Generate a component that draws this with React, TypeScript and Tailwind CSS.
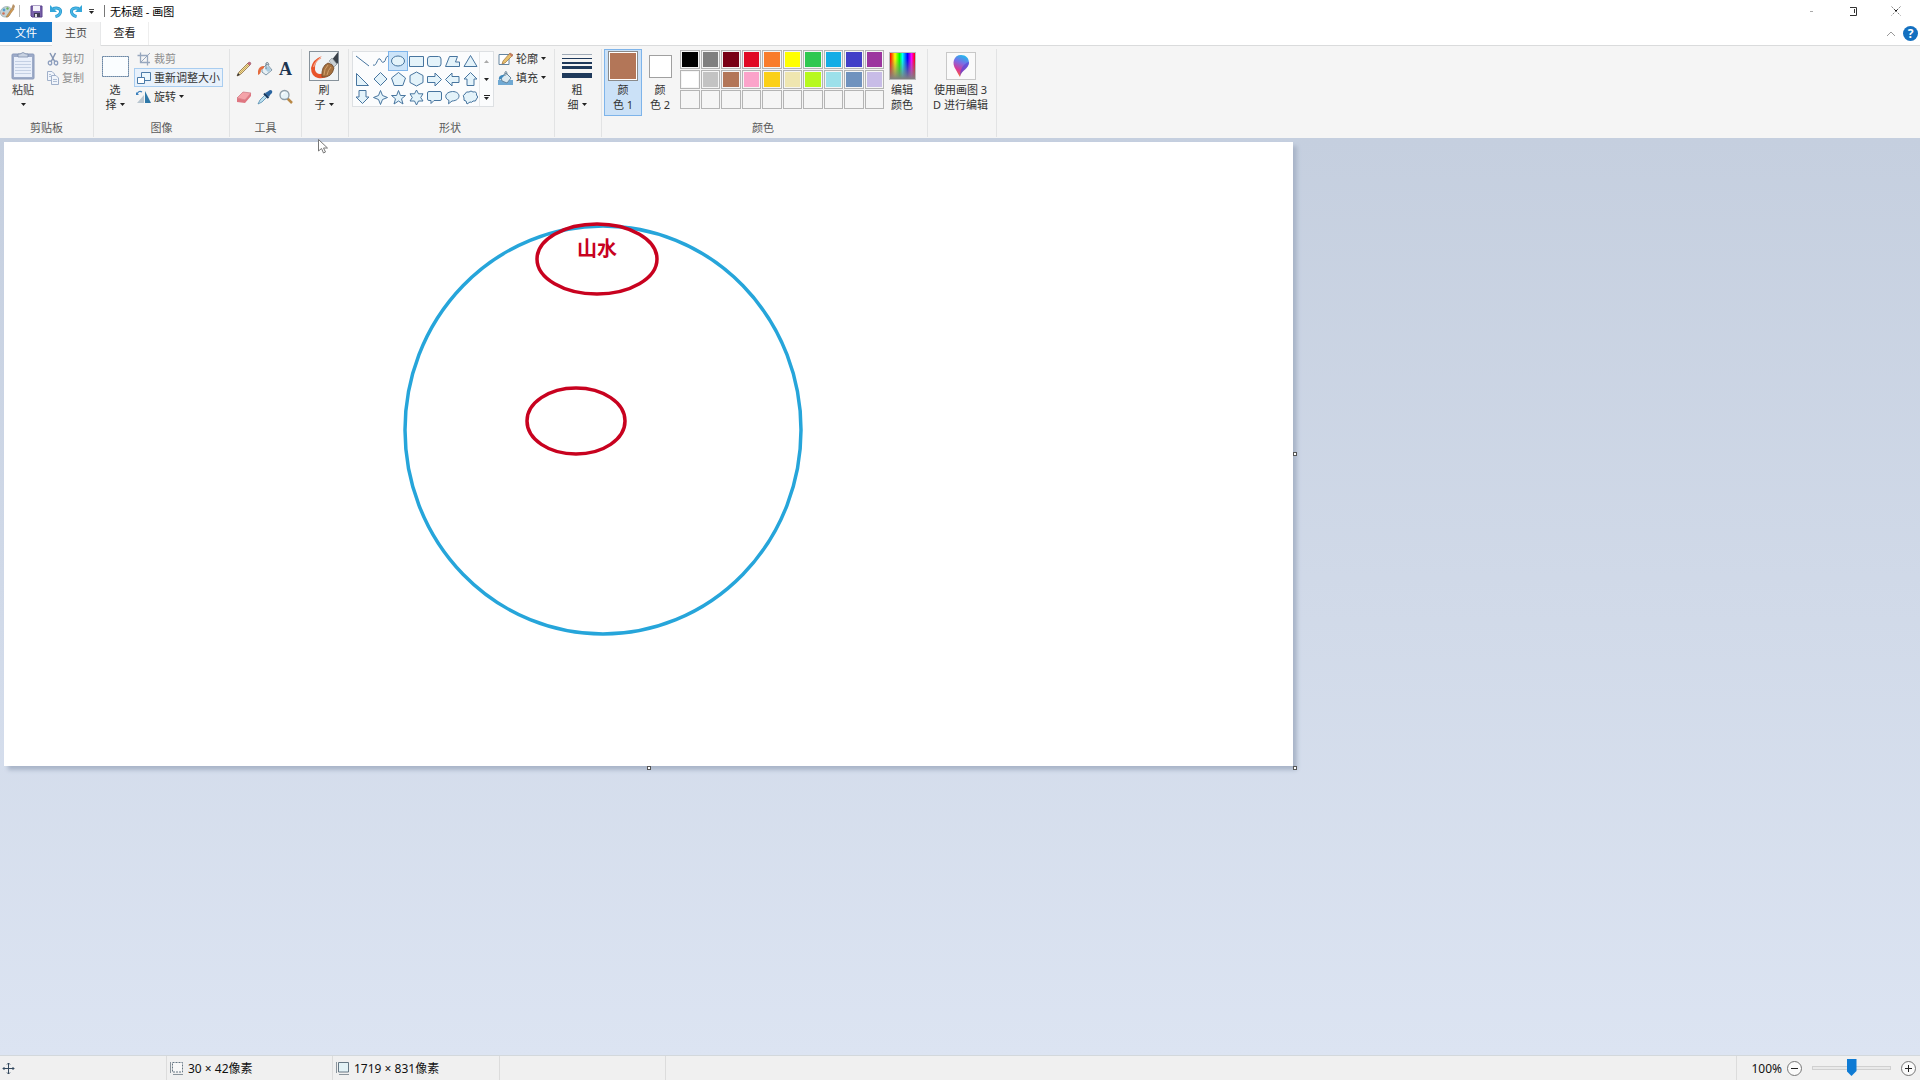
import type { ReactNode } from "react";

const row1 = ["#000000", "#7f7f7f", "#790015", "#e00a24", "#f97c2b", "#ffff00", "#2fc850", "#13ade6", "#423fc8", "#9c369f"];
const row2 = ["#ffffff", "#c3c3c3", "#b37658", "#fba3ca", "#fbd018", "#efe6b0", "#b7f91f", "#9ce0ea", "#7092be", "#c8bce7"];
const palette = [...row1, ...row2, ...Array(10).fill("")];

const shapes = [
  { name: "直线", d: "M2 3L15 13" },
  { name: "曲线", d: "M1 12C5 14 5 4 8 6C10 8 9 10 12 9C14 8 13 4 16 3" },
  { name: "椭圆形", d: "M1.500 8a6.500 5 0 1 0 13 0a6.500 5 0 1 0 -13 0Z" },
  { name: "矩形", d: "M1.5 3.500H15.500V13.500H1.500Z" },
  { name: "圆角矩形", d: "M4 3.500H12.500Q15 3.500 15 6V11Q15 13.500 12.500 13.500H4Q1.500 13.500 1.500 11V6Q1.500 3.500 4 3.500Z" },
  { name: "多边形", d: "M5.500 3.500H13.500L11.500 9H15.500V13.500H1.500Z" },
  { name: "三角形", d: "M8.500 2.500L15 13.500H2Z" },
  { name: "直角三角形", d: "M2.500 2.500V14.500H14.500Z" },
  { name: "菱形", d: "M8.500 1.500L15 8L8.500 14.500L2 8Z" },
  { name: "五边形", d: "M8.500 1.500L15.500 7L12.800 14.500H4.200L1.500 7Z" },
  { name: "六边形", d: "M8.500 1L15 4.500V11.500L8.500 15L2 11.500V4.500Z" },
  { name: "右箭头", d: "M1.500 5.500H9V2L15.500 8.500L9 15V11.500H1.500Z" },
  { name: "左箭头", d: "M15 5.500H8V2L1.500 8.500L8 15V11.500H15Z" },
  { name: "上箭头", d: "M8.500 1.500L15 8H12V14.500H5V8H2Z" },
  { name: "下箭头", d: "M5 1.500H12V8H15L8.500 14.500L2 8H5Z" },
  { name: "四角星形", d: "M8.500 1.500L10.500 6.500L15.500 8.500L10.500 10.500L8.500 15.500L6.500 10.500L1.500 8.500L6.500 6.500Z" },
  { name: "五角星形", d: "M8.500 1.500L10.400 6.500H15.500L11.500 9.800L13 15L8.500 12L4 15L5.500 9.800L1.500 6.500H6.600Z" },
  { name: "六角星形", d: "M8.500 1L10.500 4.800H15L12.700 8.500L15 12H10.500L8.500 16L6.500 12H2L4.300 8.500L2 4.800H6.500Z" },
  { name: "圆角矩形标注", d: "M3 2.500H14Q15.500 2.500 15.500 4V10Q15.500 11.500 14 11.500H8L5 14.500V11.500H3Q1.500 11.500 1.500 10V4Q1.500 2.500 3 2.500Z" },
  { name: "椭圆形标注", d: "M5 11.500C-0.500 9 1 3 8.500 2.500C17 2.500 17.500 11.500 8 12L4.500 14.800Z" },
  { name: "云形标注", d: "M4 12Q1 12 2 9Q0 6 3 5Q4 2 7 3Q9 1 11 3Q15 2 14.500 6Q17 8 14.500 10Q14 13 11 12Q10 14 8 13L5 15Z" },
];

function Caret({ up = false, className = "text-[#222]" }: { up?: boolean; className?: string }) {
  return (
    <svg viewBox="0 0 5 3" className={`inline-block h-[3px] w-[5px] shrink-0 ${className}`} aria-hidden="true">
      <path d={up ? "M0 3L2.500 0L5 3Z" : "M0 0H5L2.500 3Z"} fill="currentColor" />
    </svg>
  );
}

function Group({ label, className, children }: { label?: string; className: string; children: ReactNode }) {
  return (
    <section className={`flex shrink-0 flex-col border-r border-[#e2e3e4] ${className}`}>
      <div className="flex h-[71px] items-start">{children}</div>
      <div className="text-center leading-[16px] text-[#5a5a5a]">{label}</div>
    </section>
  );
}

function BigButton({ icon, active = false, className = "", children }: { icon: ReactNode; active?: boolean; className?: string; children: ReactNode }) {
  return (
    <button
      className={`flex h-[67px] flex-col items-center border leading-[15px] ${active ? "border-[#7eb4ea] bg-[#cbe1f7]" : "border-transparent"} ${className}`}
    >
      <span className="flex h-[32px] items-center justify-center">{icon}</span>
      {children}
    </button>
  );
}

function SmallButton({ icon, active = false, className = "", children }: { icon: ReactNode; active?: boolean; className?: string; children: ReactNode }) {
  return (
    <button
      className={`flex h-[19px] items-center gap-[3px] border whitespace-nowrap ${active ? "border-[#a9cdf0] bg-[#e8f1fb]" : "border-transparent"} ${className}`}
    >
      {icon}
      {children}
    </button>
  );
}

function PaintIcon() {
  return (
    <svg viewBox="0 0 16 16" className="size-4" aria-hidden="true">
      <path d="M1 7C4 2 10 3 11 6C12 9 9 9 10 11C10 14 5 15 2 13C0 11 0 9 1 7Z" fill="#c4d3d6" stroke="#8fa5ab" strokeWidth=".7" />
      <circle cx="4" cy="7" r="1.400" fill="#4f9fd0" />
      <circle cx="7.500" cy="5.500" r="1.200" fill="#71b25b" />
      <circle cx="3.500" cy="10.500" r="1.300" fill="#cf7058" />
      <path d="M6 14L12 5L14 6L8 14Z" fill="#d49a52" stroke="#94703f" strokeWidth=".5" />
      <path d="M11.500 5L13 1L15 3L14 6Z" fill="#b69268" />
    </svg>
  );
}

function SaveIcon() {
  return (
    <svg viewBox="0 0 13 13" className="size-[13px]" aria-hidden="true">
      <path d="M1 1H12V12H2L1 11Z" fill="#7861a9" stroke="#5a438d" />
      <path d="M3 1H10V6H3Z" fill="#f4f2fa" />
      <path d="M4 8H10V12H4Z" fill="#3d3954" />
      <path d="M5 9H7V12H5Z" fill="#ddd" />
    </svg>
  );
}

function UndoIcon({ flip = false }: { flip?: boolean }) {
  return (
    <svg viewBox="0 0 14 14" className={flip ? "size-[14px] -scale-x-100" : "size-[14px]"} aria-hidden="true">
      <path d="M4 4.500C9 3 12 5 11.500 8C11 11 9 12 6.500 12.500" fill="none" stroke="#2793cb" strokeWidth="3" />
      <path d="M4 4.500C9 3 12 5 11.500 8C11 11 9 12 6.500 12.500" fill="none" stroke="#49b8e6" strokeWidth="1.600" />
      <path d="M1 1V8H8Z" fill="#35a7da" />
    </svg>
  );
}

function PasteIcon() {
  return (
    <svg viewBox="0 0 24 28" className="h-[28px] w-[24px]" aria-hidden="true">
      <rect x="1" y="2" width="22" height="25" rx="1" fill="#9dabc8" stroke="#8a9abb" />
      <path d="M3 5H21V25H3Z" fill="#e9effa" />
      <path d="M4 9.500H20M4 12.500H20M4 15.500H20M4 18.500H20M4 21.500H20" stroke="#c4d0e4" />
      <path d="M7 2H9Q12 -1 15 2H17V5H7Z" fill="#c8d2e2" stroke="#7c8dac" strokeWidth=".8" />
    </svg>
  );
}

function CutIcon() {
  return (
    <svg viewBox="0 0 12 14" className="h-[14px] w-3" fill="none" aria-hidden="true">
      <path d="M3 1L8 10M8.500 1L4 10" stroke="#8495b3" strokeWidth="1.500" />
      <ellipse cx="3" cy="11" rx="1.700" ry="2" stroke="#8fa0bf" strokeWidth="1.300" />
      <ellipse cx="9" cy="11" rx="1.700" ry="2" stroke="#8fa0bf" strokeWidth="1.300" />
    </svg>
  );
}

function CopyIcon() {
  return (
    <svg viewBox="0 0 12 14" className="h-[14px] w-3" fill="#f1f5fb" stroke="#a0b0ca" aria-hidden="true">
      <path d="M.500 .500H5L7.500 3V9.500H.500Z" />
      <path d="M4.500 4.500H9L11.500 7V13.500H4.500Z" />
      <path d="M2 3.500H4M2 5.500H4M6 8.500H10M6 10.500H10" strokeWidth=".8" />
    </svg>
  );
}

function CropIcon() {
  return (
    <svg viewBox="0 0 14 14" className="size-[14px]" fill="none" stroke="#97a7be" aria-hidden="true">
      <path d="M3.500 .500V10.500H13M.500 3.500H10.500V13.500" strokeWidth="1.300" />
      <path d="M4 10L13 1" />
    </svg>
  );
}

function ResizeIcon() {
  return (
    <svg viewBox="0 0 14 14" className="size-[14px]" fill="#fff" stroke="#4b7ba8" aria-hidden="true">
      <path d="M4.500 1.500H13.500V9.500H4.500Z" fill="#eaf6fc" />
      <path d="M.500 6.500H7.500V12.500H.500Z" />
    </svg>
  );
}

function RotateIcon() {
  return (
    <svg viewBox="0 0 15 14" className="h-[14px] w-[15px]" aria-hidden="true">
      <path d="M9 1V13H15Z" fill="#2e78a8" />
      <path d="M8 5V13H1Z" fill="#b9c6d0" />
      <path d="M1 4Q3 0 6 2" fill="none" stroke="#3d81bd" strokeWidth="1.300" />
      <path d="M0 2V5H3Z" fill="#3d81bd" />
    </svg>
  );
}

const tools = [
  {
    name: "铅笔",
    icon: (
      <>
        <path d="M1 15L3 11L12 2L14 4L5 13Z" fill="#f0dd9a" stroke="#8b6b3d" strokeWidth=".8" />
        <path d="M11.500 2.500L13.500 4.500L15 3Q15 1 13 1Z" fill="#c9697b" stroke="#8d5060" strokeWidth=".5" />
        <path d="M1 15L2 12L4 14Z" fill="#333" />
        <path d="M4 12L12.500 3.500" stroke="#b68b3b" strokeWidth=".7" />
      </>
    ),
  },
  {
    name: "用颜色填充",
    icon: (
      <>
        <path d="M5 8L10 3L15 9L9 14L5 11Z" fill="#e6eff4" stroke="#7f97a8" />
        <path d="M8 8L11 5L14 9L11 11Z" fill="#a9cbe0" />
        <path d="M9 8V2Q11 0 12 4" fill="none" stroke="#6f8190" />
        <path d="M7 5Q2 5 1 10V14Q4 13 4 9L7 7Z" fill="#e46c3e" />
      </>
    ),
  },
  { name: "文本", icon: <text x="1" y="14" fontSize="18" fontWeight="700" fontFamily="Liberation Serif, serif" fill="#1c3450">A</text> },
  {
    name: "橡皮擦",
    icon: (
      <>
        <path d="M1 9L7 3L15 4L9 11Z" fill="#f4a3a9" stroke="#cb7480" strokeWidth=".7" />
        <path d="M1 9L9 11V14L1 13ZM9 11L15 4V7L9 14Z" fill="#df7681" />
      </>
    ),
  },
  {
    name: "颜色选取器",
    icon: (
      <>
        <path d="M1 15L3 11L9 5L11 7L5 13Z" fill="#bce0ef" stroke="#538caf" strokeWidth=".8" />
        <path d="M8 4L12 8L13 6L15 4Q16 1 13 1L10 3Z" fill="#2b65a0" />
        <path d="M7 4.500L11.500 9" stroke="#193a60" strokeWidth="2" />
      </>
    ),
  },
  {
    name: "放大镜",
    icon: (
      <>
        <path d="M9 9L14 14" stroke="#b98947" strokeWidth="2.500" />
        <circle cx="6.500" cy="6" r="4.500" fill="#e6f3f9" stroke="#8e9da8" strokeWidth="1.300" />
        <path d="M4 6Q4 3 7 3.500" fill="none" stroke="#fff" />
      </>
    ),
  },
];

function BrushIcon() {
  return (
    <svg viewBox="0 0 28 28" className="size-[30px] border border-[#87929b] bg-[#f0f4f6]" aria-hidden="true">
      <path d="M12 4Q3 7 1 16Q1 24 8 26Q14 27 18 24L14 21Q7 24 5 18Q4 10 12 4Z" fill="#e8532a" />
      <path d="M11 6Q5 9 3.500 15" fill="none" stroke="#f6a183" strokeWidth="1.200" />
      <path d="M21 9L28 0V11L25 14Z" fill="#394149" />
      <path d="M19 9L22 6L27 12L24 15Z" fill="#c9d0d4" stroke="#858f96" strokeWidth=".6" />
      <path d="M12 25Q11 14 18 11Q23 12 24 16Q22 26 12 25Z" fill="#a5713f" stroke="#70492a" strokeWidth=".8" />
      <path d="M14 23Q14 17 18 13M17 23Q18 18 21 15" stroke="#d2a16c" fill="none" />
    </svg>
  );
}

function OutlineIcon() {
  return (
    <svg viewBox="0 0 15 14" className="h-[14px] w-[15px]" aria-hidden="true">
      <path d="M1 2.500H11V12.500H1Z" fill="#fff" stroke="#6384a0" />
      <path d="M4 12L5 9L12 1L15 3L7 11Z" fill="#e8c06b" stroke="#997140" strokeWidth=".7" />
      <path d="M12 1L15 3L14 5L11 2Z" fill="#c57863" />
    </svg>
  );
}

function FillIcon() {
  return (
    <svg viewBox="0 0 15 14" className="h-[14px] w-[15px]" aria-hidden="true">
      <path d="M0 9H15V14H0Z" fill="#70a9d3" />
      <path d="M3 6L8 2L13 7L9 12L4 10Z" fill="#dce9f0" stroke="#6285a0" />
      <path d="M4 4Q0 5 1 9L3 8L7 4Z" fill="#4189bd" />
      <path d="M7 5V1Q9 -1 9 4" fill="none" stroke="#748c9d" />
    </svg>
  );
}

function Pin3DIcon() {
  return (
    <svg viewBox="0 0 28 26" className="h-[28px] w-[30px] border border-[#c8c8c8] bg-[#fafafa]" aria-hidden="true">
      <defs>
        <linearGradient id="pin" x1="0.600" y1="0" x2="0.300" y2="1">
          <stop offset="0" stopColor="#22b9ee" />
          <stop offset=".35" stopColor="#7a6de6" />
          <stop offset=".7" stopColor="#dd3792" />
          <stop offset="1" stopColor="#ee7a30" />
        </linearGradient>
      </defs>
      <path d="M14 2C19 2 22 5 22 10C21 16 14 17 13 24Q11 21 9 17C4 10 7 2 14 2Z" fill="url(#pin)" />
      <path d="M22 9C22 16 15 17 13 23Q13 16 17 12Q20 9 22 9Z" fill="#5a49d6" opacity=".7" />
    </svg>
  );
}

function TitleBar() {
  return (
    <header className="flex h-[22px] items-center bg-white">
      <PaintIcon />
      <span className="ml-[3px] h-3 w-px bg-[#bbb]" />
      <button aria-label="保存" className="ml-[10px]"><SaveIcon /></button>
      <button aria-label="撤消" className="ml-[6px]"><UndoIcon /></button>
      <button aria-label="重做" className="ml-[6px]"><UndoIcon flip /></button>
      <button aria-label="自定义快速访问工具栏" className="ml-[6px] flex flex-col items-center gap-px">
        <span className="h-px w-[5px] bg-[#444]" />
        <Caret />
      </button>
      <span className="ml-[10px] h-3 w-px bg-[#777]" />
      <h1 className="ml-[5px] text-black">无标题 - 画图</h1>
      <div className="ml-auto flex items-center pr-[14px]">
        <button aria-label="最小化" className="flex h-4 w-[42px] items-center justify-center">
          <span className="h-px w-[3px] bg-[#aaa]" />
        </button>
        <button aria-label="向下还原" className="flex h-4 w-[42px] items-center justify-center">
          <svg viewBox="0 0 8 9" className="h-[9px] w-2" fill="none" aria-hidden="true">
            <path d="M1 .500H7.500V8.500H1M5.500 2V6" stroke="#333" />
          </svg>
        </button>
        <button aria-label="关闭" className="ml-[12px] flex h-4 w-5 items-center justify-center">
          <svg viewBox="0 0 10 10" className="size-[10px]" fill="none" stroke="#888" aria-hidden="true">
            <path d="M.500 .500L9.500 9.500M9.500 .500L.500 9.500" strokeDasharray="2 1" />
            <path d="M3.500 3.500L5 5L6.500 3.500" stroke="#111" />
          </svg>
        </button>
      </div>
    </header>
  );
}

function TabBar() {
  return (
    <nav className="flex h-6 items-stretch border-b border-[#dadbdc] bg-white">
      <button className="mb-[3px] w-[52px] bg-[#1979ca] text-white">文件</button>
      <button className="-mb-px w-[49px] border-r border-[#e7e8e9] bg-[#f5f5f5] pb-[3px] text-[#444]">主页</button>
      <button className="w-[48px] border-r border-[#eeeeee] pb-[2px] text-[#222]">查看</button>
      <div className="ml-auto flex items-center gap-[7px] pr-[2px]">
        <button aria-label="最小化功能区">
          <svg viewBox="0 0 10 6" className="h-[6px] w-[10px]" fill="none" stroke="#999" aria-hidden="true">
            <path d="M1 5L5 1L9 5" />
          </svg>
        </button>
        <button aria-label="帮助" className="size-[15px] rounded-full bg-[#1470c0] text-[12px] leading-[15px] font-bold text-white">?</button>
      </div>
    </nav>
  );
}

function Ribbon() {
  return (
    <div className="flex h-[92px] overflow-hidden bg-[#f5f5f5] pt-[3px] pb-px">
      <Group label="剪贴板" className="w-[94px]">
        <BigButton icon={<PasteIcon />} className="ml-[4px] w-[38px] text-[#444]">
          <span>粘贴</span>
          <span className="flex h-[15px] items-center"><Caret /></span>
        </BigButton>
        <div className="ml-[4px] text-[#8c8c8c]">
          <SmallButton icon={<CutIcon />}>剪切</SmallButton>
          <SmallButton icon={<CopyIcon />}>复制</SmallButton>
        </div>
      </Group>

      <Group label="图像" className="w-[136px]">
        <BigButton
          icon={
            <svg viewBox="0 0 27 21" className="h-[21px] w-[27px]" aria-hidden="true">
              <path d="M.500 .500H26.500V20.500H.500Z" fill="#fafdff" stroke="#2f5680" strokeDasharray="1.200 .8" />
            </svg>
          }
          className="ml-[4px] w-[34px]"
        >
          <span>选</span>
          <span className="flex items-center gap-[3px]">择<Caret /></span>
        </BigButton>
        <div className="ml-[2px]">
          <SmallButton icon={<CropIcon />} className="px-[2px] text-[#8c8c8c]">裁剪</SmallButton>
          <SmallButton icon={<ResizeIcon />} active className="px-[2px]">重新调整大小</SmallButton>
          <SmallButton icon={<RotateIcon />} className="px-[1px]">旋转<Caret /></SmallButton>
        </div>
      </Group>

      <Group label="工具" className="w-[72px]">
        <div className="mt-[6px] ml-[3px] grid grid-cols-3">
          {tools.map((t) => (
            <button key={t.name} aria-label={t.name} className="flex h-[28px] w-[21px] items-center justify-center">
              <svg viewBox="0 0 16 16" className="size-4 overflow-visible" fill="none">{t.icon}</svg>
            </button>
          ))}
        </div>
      </Group>

      <Group className="w-[47px]">
        <BigButton icon={<BrushIcon />} className="ml-[3px] w-[38px]">
          <span>刷</span>
          <span className="flex items-center gap-[3px]">子<Caret /></span>
        </BigButton>
      </Group>

      <Group label="形状" className="w-[206px] pr-[3px]">
        <div className="mt-[2px] ml-[3px] flex border border-[#dde0e3] bg-[#fbfcfd]">
          <div className="grid grid-cols-7">
            {shapes.map((s, i) => (
              <button
                key={s.name}
                aria-label={s.name}
                className={`flex h-[18px] w-[18px] items-center justify-center ${i === 2 ? "bg-[#cce4f9] outline outline-[#7eb4ea]" : ""}`}
              >
                <svg viewBox="0 0 17 17" className="size-[17px]" fill={i < 2 ? "none" : "#e4f3fa"} stroke="#47759f">
                  <path d={s.d} />
                </svg>
              </button>
            ))}
          </div>
          <div className="flex w-[14px] flex-col border-l border-[#e6e8ea]">
            <button aria-label="上一行" className="flex h-[18px] items-center justify-center"><Caret up className="text-[#aaa]" /></button>
            <button aria-label="下一行" className="flex h-[18px] items-center justify-center"><Caret /></button>
            <button aria-label="更多形状" className="flex h-[18px] flex-col items-center justify-center gap-px">
              <span className="h-px w-[6px] bg-[#222]" />
              <Caret />
            </button>
          </div>
        </div>
        <div className="ml-[3px]">
          <SmallButton icon={<OutlineIcon />}>轮廓<Caret /></SmallButton>
          <SmallButton icon={<FillIcon />}>填充<Caret /></SmallButton>
        </div>
      </Group>

      <Group className="w-[47px]">
        <BigButton
          icon={
            <svg viewBox="0 0 30 25" className="h-[25px] w-[30px]" fill="#1e395b" aria-hidden="true">
              <path d="M0 0H30V1H0Z" opacity=".4" />
              <path d="M0 4H30V5H0ZM0 8H30V10H0ZM0 12H30V15H0ZM0 19H30V24H0Z" />
            </svg>
          }
          className="ml-[3px] w-[38px]"
        >
          <span>粗</span>
          <span className="flex items-center gap-[3px]">细<Caret /></span>
        </BigButton>
      </Group>

      <Group label="颜色" className="w-[326px] pr-[3px]">
        <BigButton
          icon={
            <span className="size-[30px] border border-[#8a8a8a] bg-white p-px">
              <span className="block h-full w-full bg-[#b37658]" />
            </span>
          }
          active
          className="ml-[2px] w-[38px]"
        >
          <span>颜</span>
          <span>色 1</span>
        </BigButton>
        <BigButton icon={<span className="size-[23px] border border-[#a0a0a0] bg-white" />} className="w-[36px]">
          <span>颜</span>
          <span>色 2</span>
        </BigButton>
        <div className="mt-px ml-[2px] grid w-[204px] shrink-0 grid-cols-10 gap-x-px gap-y-px">
          {palette.map((c, i) => (
            <button
              key={i}
              aria-label={c ? `颜色 ${c}` : "自定义颜色"}
              className="h-[19px] border border-[#b4b4b4] p-px"
            >
              <span className="block h-full w-full" style={{ backgroundColor: c || "#f5f5f5" }} />
            </button>
          ))}
        </div>
        <BigButton
          icon={
            <span className="h-[28px] w-[27px] border border-[#bbb] bg-[linear-gradient(to_top,#808080,transparent_80%),linear-gradient(to_right,#f00,#ff0_20%,#0f0_38%,#0ff_50%,#00f_70%,#f0f_86%,#f00)]" />
          }
          className="ml-px w-[34px]"
        >
          <span>编辑</span>
          <span>颜色</span>
        </BigButton>
      </Group>

      <Group className="w-[69px]">
        <BigButton icon={<Pin3DIcon />} className="w-[65px] whitespace-nowrap">
          <span>使用画图 3</span>
          <span>D 进行编辑</span>
        </BigButton>
      </Group>
    </div>
  );
}

function Handle({ className }: { className: string }) {
  return <span className={`absolute size-[4px] border border-[#555] bg-white ${className}`} />;
}

function Workspace() {
  return (
    <main className="min-h-0 flex-1 overflow-hidden bg-linear-to-b from-[#c5cfdf] to-[#dce4f2] pt-[4px] pl-[4px]">
      <div className="relative h-[624px] w-[1289px] bg-white shadow-[4px_4px_4px_#a9b5c8]">
        <svg viewBox="0 0 1289 624" className="size-full" fill="none">
          <ellipse cx="599" cy="288" rx="198" ry="204" stroke="#26a5da" strokeWidth="3.500" />
          <ellipse cx="593" cy="117" rx="60" ry="35" stroke="#c8021f" strokeWidth="3.500" />
          <ellipse cx="572" cy="279" rx="49" ry="33" stroke="#c8021f" strokeWidth="3.500" />
          <text x="573" y="114" fontSize="20" fontWeight="700" fill="#c8021f">山水</text>
        </svg>
        <Handle className="top-1/2 -right-[4px] -translate-y-1/2" />
        <Handle className="-bottom-[4px] left-1/2 -translate-x-1/2" />
        <Handle className="-right-[4px] -bottom-[4px]" />
        <svg viewBox="0 0 10 16" className="absolute -top-[3px] left-[314px] h-4 w-[10px]" aria-hidden="true">
          <path d="M.500 .500V12L3.500 9.500L5.500 14L7.500 13L5.500 9H9.500Z" fill="#fff" stroke="#777" />
        </svg>
      </div>
    </main>
  );
}

function SizeIcon({ dashed = false }: { dashed?: boolean }) {
  return (
    <svg viewBox="0 0 14 14" className="size-[14px]" fill="none" aria-hidden="true">
      <path d="M2.500 1.500H12.500V11H2.500Z" fill={dashed ? "#f8f8f8" : "#e3f2f6"} stroke="#667784" strokeDasharray={dashed ? "2 1" : undefined} />
      <path d="M.500 1V12M3 13.500H13" stroke="#8a949c" />
    </svg>
  );
}

function StatusBar() {
  return (
    <footer className="flex h-[25px] items-center border-t border-[#d3d8dc] bg-[#f0f0f0] text-[12px] text-[#111] [&>div]:h-full">
      <div className="flex w-[167px] items-center border-r border-[#dcdcdc] pl-[2px]">
        <svg viewBox="0 0 13 13" className="size-[13px]" fill="none" stroke="#34495e" aria-hidden="true">
          <path d="M6.500 1V12M1 6.500H12M5 2.500L6.500 1L8 2.500M5 10.500L6.500 12L8 10.500M2.500 5L1 6.500L2.500 8M10.500 5L12 6.500L10.500 8" />
        </svg>
      </div>
      <div className="flex w-[166px] items-center gap-1 border-r border-[#dcdcdc] pl-[3px]">
        <SizeIcon dashed />
        <span>30 × 42像素</span>
      </div>
      <div className="flex w-[167px] items-center gap-1 border-r border-[#dcdcdc] pl-[3px]">
        <SizeIcon />
        <span>1719 × 831像素</span>
      </div>
      <div className="w-[166px] border-r border-[#dcdcdc]" />
      <div className="ml-auto flex items-center border-l border-[#dcdcdc] pr-1 pl-[14px]">
        <label htmlFor="zoom" className="mr-[5px]">100%</label>
        <button aria-label="缩小" className="flex size-[15px] items-center justify-center rounded-full border border-[#777] bg-[#fafafa]">
          <span className="h-px w-[7px] bg-[#222]" />
        </button>
        <input
          id="zoom"
          type="range"
          defaultValue={50}
          className="mx-[10px] h-[18px] w-[79px] appearance-none bg-transparent [&::-webkit-slider-runnable-track]:h-[4px] [&::-webkit-slider-runnable-track]:border [&::-webkit-slider-runnable-track]:border-[#d0d0d0] [&::-webkit-slider-runnable-track]:bg-[#e9e9e9] [&::-webkit-slider-thumb]:-mt-[8px] [&::-webkit-slider-thumb]:h-[17px] [&::-webkit-slider-thumb]:w-[10px] [&::-webkit-slider-thumb]:appearance-none [&::-webkit-slider-thumb]:bg-[#0f7bd4] [&::-webkit-slider-thumb]:[clip-path:polygon(0_0,100%_0,100%_70%,50%_100%,0_70%)]"
        />
        <button aria-label="放大" className="flex size-[15px] items-center justify-center rounded-full border border-[#777] bg-[#fafafa]">
          <svg viewBox="0 0 7 7" className="size-[7px]" stroke="#222" aria-hidden="true">
            <path d="M3.500 0V7M0 3.500H7" />
          </svg>
        </button>
      </div>
    </footer>
  );
}

export default function App() {
  return (
    <div className="flex h-screen flex-col overflow-hidden bg-white font-['Noto_Sans','Noto_Sans_CJK_SC',sans-serif] text-[11px] leading-[15px] text-[#333]">
      <TitleBar />
      <TabBar />
      <Ribbon />
      <Workspace />
      <StatusBar />
    </div>
  );
}
